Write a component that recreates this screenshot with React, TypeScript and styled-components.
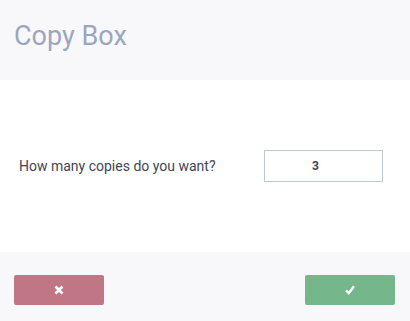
import React, { useState } from "react";
import styled, { createGlobalStyle } from "styled-components";

const GlobalStyle = createGlobalStyle`
  html, body {
    margin: 0;
    padding: 0;
    background: #ffffff;
  }
  body {
    font-family: Roboto, "Noto Sans", Arial, sans-serif;
  }
`;

const Modal = styled.div`
  width: 410px;
  height: 321px;
  display: flex;
  flex-direction: column;
  background: #ffffff;
`;

const Header = styled.header`
  height: 80px;
  box-sizing: border-box;
  background: #f8f8fa;
  padding: 20px 14px 0;
`;

const Title = styled.h1`
  margin: 0;
  font-size: 27px;
  font-weight: 400;
  line-height: 32px;
  color: #9ba6be;
`;

const Body = styled.div`
  flex: 1;
  display: flex;
  align-items: center;
  justify-content: space-between;
  padding: 0 27px 0 19px;
`;

const Label = styled.label`
  font-size: 14px;
  color: #3f4554;
`;

const NumberInput = styled.input`
  width: 119px;
  height: 32px;
  box-sizing: border-box;
  border: 1px solid #bccad6;
  border-radius: 0;
  text-align: center;
  font-family: Roboto, Arial, sans-serif;
  font-size: 12px;
  font-weight: 700;
  color: #3f4554;
  outline: none;
  padding: 0 16px 0 0;
`;

const Footer = styled.footer`
  height: 69px;
  box-sizing: border-box;
  background: #f8f8fa;
  display: flex;
  align-items: flex-start;
  justify-content: space-between;
  padding: 23px 15px 0 14px;
`;

const ActionButton = styled.button<{ tone: "cancel" | "confirm" }>`
  width: 90px;
  height: 30px;
  border: none;
  border-radius: 2px;
  background: ${({ tone }) => (tone === "cancel" ? "#c07685" : "#75b68b")};
  display: flex;
  align-items: center;
  justify-content: center;
  padding: 0;
  cursor: pointer;
`;

const CrossIcon = () => (
  <svg width="10" height="10" viewBox="0 0 10 10">
    <path d="M1.5 1.5 L8.5 8.5 M8.5 1.5 L1.5 8.5" stroke="#fff" strokeWidth="2.6" />
  </svg>
);

const CheckIcon = () => (
  <svg width="10" height="10" viewBox="0 0 10 10">
    <path d="M1 5.5 L3.8 8.2 L9 1.2" stroke="#fff" strokeWidth="2.3" fill="none" />
  </svg>
);

export default function App() {
  const [copies, setCopies] = useState("3");

  return (
    <>
      <GlobalStyle />
      <Modal>
        <Header>
          <Title>Copy Box</Title>
        </Header>
        <Body>
          <Label htmlFor="copies">How many copies do you want?</Label>
          <NumberInput
            id="copies"
            value={copies}
            onChange={(e) => setCopies(e.target.value)}
          />
        </Body>
        <Footer>
          <ActionButton tone="cancel" aria-label="Cancel">
            <CrossIcon />
          </ActionButton>
          <ActionButton tone="confirm" aria-label="Confirm">
            <CheckIcon />
          </ActionButton>
        </Footer>
      </Modal>
    </>
  );
}
